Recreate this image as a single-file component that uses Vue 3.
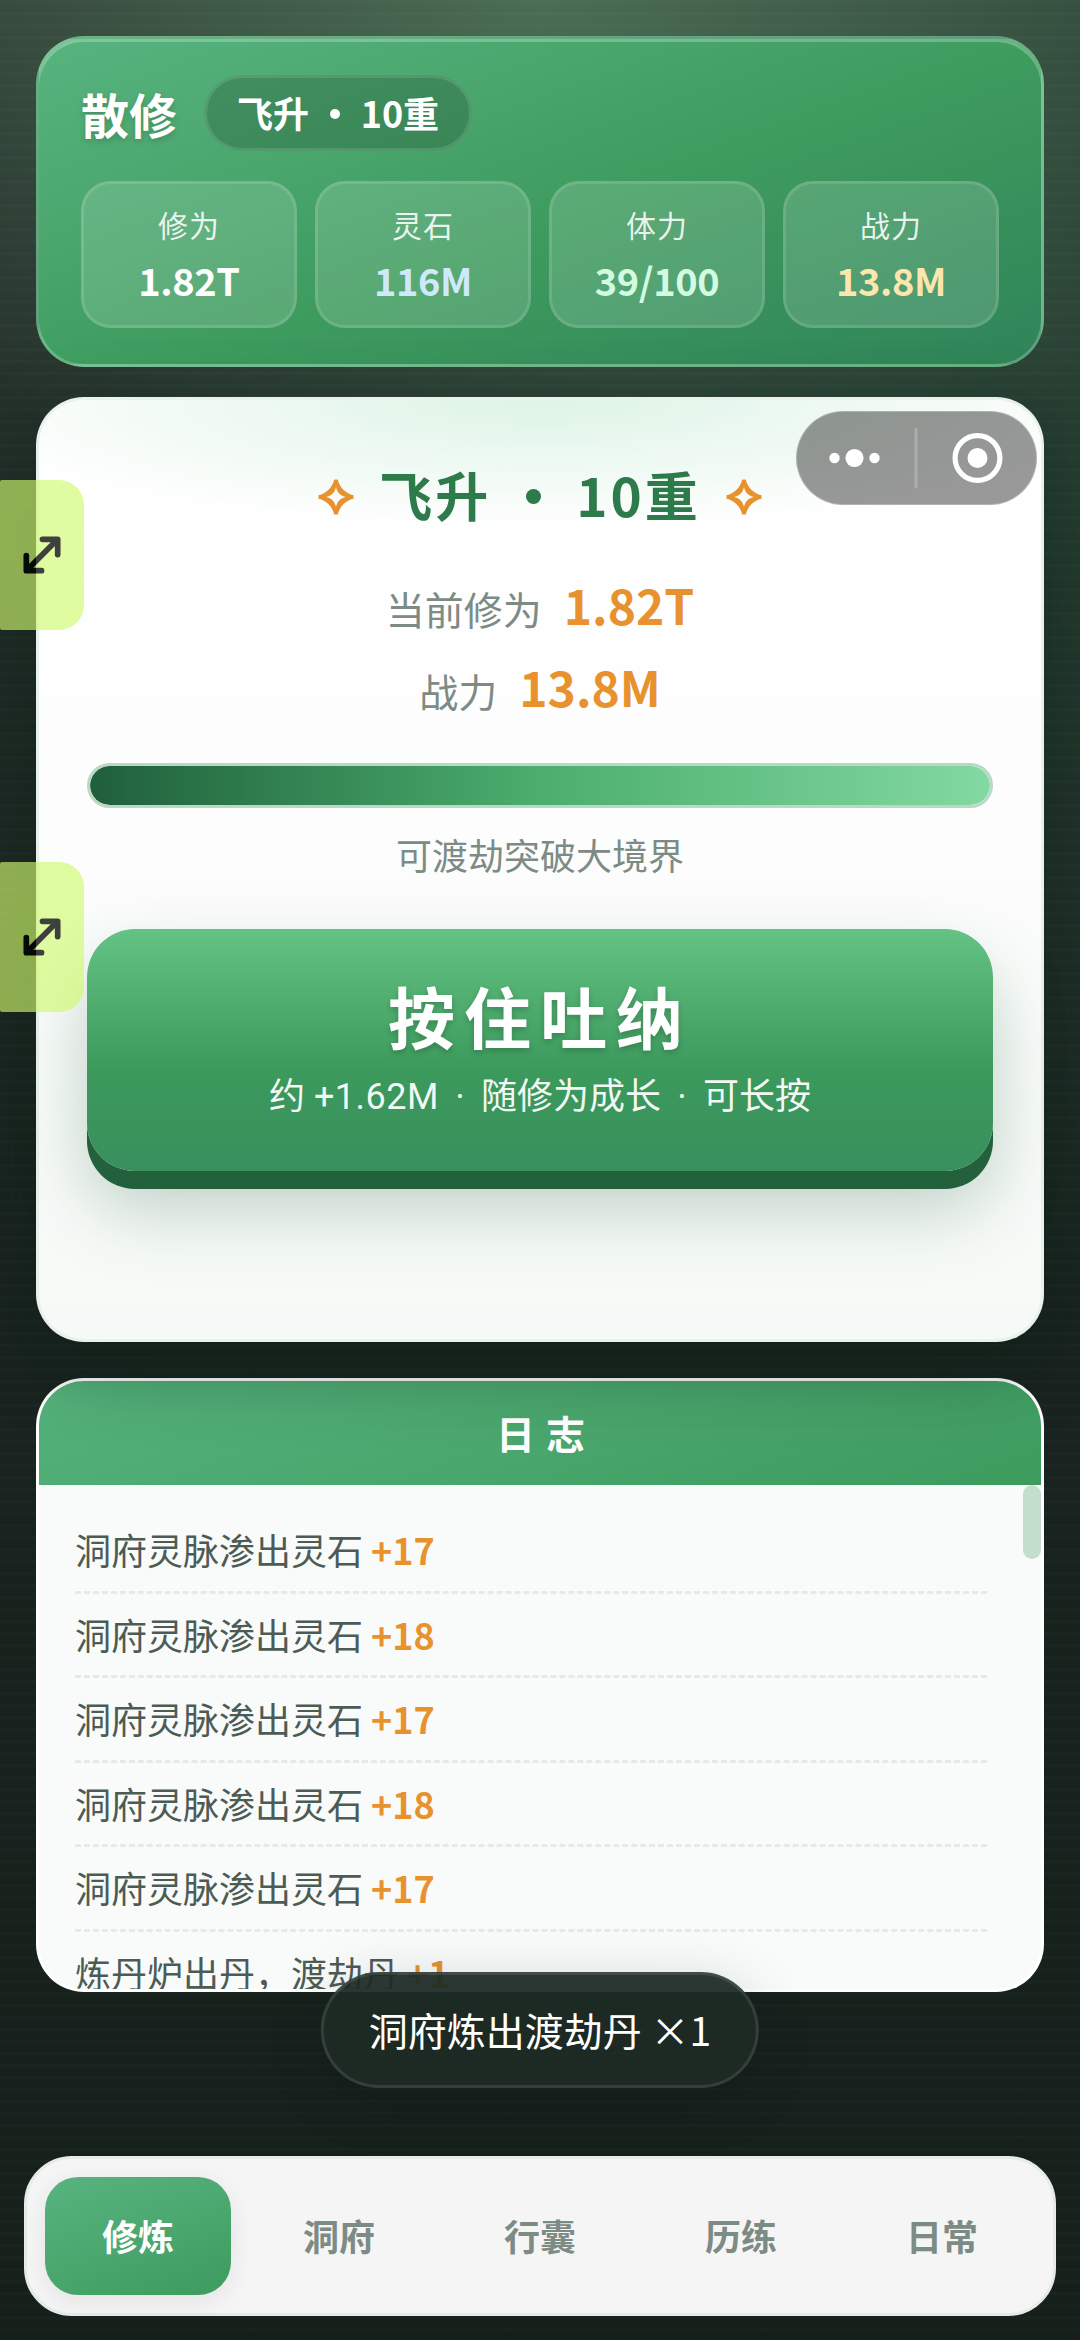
<script setup>
const stats = [
  { label: '修为', value: '1.82T', tone: 'plain' },
  { label: '灵石', value: '116M', tone: 'stone' },
  { label: '体力', value: '39/100', tone: 'energy' },
  { label: '战力', value: '13.8M', tone: 'power' },
]

const logs = [
  { text: '洞府灵脉渗出灵石', gain: '+17' },
  { text: '洞府灵脉渗出灵石', gain: '+18' },
  { text: '洞府灵脉渗出灵石', gain: '+17' },
  { text: '洞府灵脉渗出灵石', gain: '+18' },
  { text: '洞府灵脉渗出灵石', gain: '+17' },
  { text: '炼丹炉出丹，渡劫丹', gain: '+1' },
]

const tabs = ['修炼', '洞府', '行囊', '历练', '日常']
const activeTab = '修炼'
const progress = 100

// Hollow four-pointed star: blunt outer contour, sharp inner cut-out
const starPath =
  'M16.2 .5H19.8C21.4 8.2 27.8 14.6 35.5 16.2V19.8C27.8 21.4 21.4 27.8 19.8 35.5H16.2C14.6 27.8 8.2 21.4 .5 19.8V16.2C8.2 14.6 14.6 8.2 16.2 .5Z' +
  'M18 8C16.8 13.6 13.6 16.8 8 18C13.6 19.2 16.8 22.4 18 28C19.2 22.4 22.4 19.2 28 18C22.4 16.8 19.2 13.6 18 8Z'
</script>

<template>
  <div class="page">
    <header class="profile">
      <div class="identity">
        <span class="name">散修</span>
        <span class="rank">飞升 <i class="dot"></i> 10重</span>
      </div>
      <div class="stats">
        <div v-for="s in stats" :key="s.label" class="stat">
          <span class="stat-label">{{ s.label }}</span>
          <span class="stat-value" :class="s.tone">{{ s.value }}</span>
        </div>
      </div>
    </header>

    <main class="realm">
      <div class="realm-title">
        <svg class="star" viewBox="0 0 36 36"><path :d="starPath" /></svg>
        <h1>飞升 <i class="dot"></i> 10重</h1>
        <svg class="star" viewBox="0 0 36 36"><path :d="starPath" /></svg>
      </div>
      <div class="figure"><span>当前修为</span><b>1.82T</b></div>
      <div class="figure"><span>战力</span><b>13.8M</b></div>
      <div class="bar"><div class="fill" :style="{ width: progress + '%' }"></div></div>
      <p class="hint">可渡劫突破大境界</p>
      <button class="breathe">
        <span class="breathe-title">按住吐纳</span>
        <span class="breathe-sub">约 <em>+1.62M</em><i>·</i>随修为成长<i>·</i>可长按</span>
      </button>
    </main>

    <section class="log">
      <h2>日 志</h2>
      <div class="log-body">
        <ul>
          <li v-for="(l, i) in logs" :key="i">{{ l.text }} <b>{{ l.gain }}</b></li>
        </ul>
        <div class="track"><div class="thumb"></div></div>
      </div>
    </section>

    <nav class="tabs">
      <button v-for="t in tabs" :key="t" :class="{ active: t === activeTab }">{{ t }}</button>
    </nav>

    <div class="toast">洞府炼出渡劫丹 ×1</div>

    <div class="capsule">
      <svg viewBox="0 0 240 94">
        <g fill="#fff">
          <circle cx="38.5" cy="47" r="5.2" />
          <circle cx="58.5" cy="47" r="9.1" />
          <circle cx="78.5" cy="47" r="5.2" />
          <circle cx="181.5" cy="47" r="10" />
        </g>
        <rect x="118.5" y="17" width="3" height="60" fill="#fff" fill-opacity=".22" />
        <circle cx="181.5" cy="47" r="22.4" fill="none" stroke="#fff" stroke-width="5.2" />
      </svg>
    </div>

    <div v-for="n in 2" :key="n" class="handle" :class="'handle-' + n">
      <svg viewBox="0 0 40 40">
        <path d="M20.5 3.5H36.5V19.5M3.5 20.5V36.5H19.5M36 4L4 36" />
      </svg>
    </div>
  </div>
</template>

<style>
body {
  margin: 0;
}
</style>

<style scoped>
* {
  box-sizing: border-box;
}

.page {
  position: relative;
  display: flex;
  flex-direction: column;
  width: 1080px;
  height: 2340px;
  padding: 36px 24px 24px;
  overflow: hidden;
  font-family: "Noto Sans CJK SC", sans-serif;
  background:
    repeating-linear-gradient(180deg, rgba(255, 255, 255, 0.014) 0 3px, transparent 3px 12px),
    radial-gradient(ellipse 760px 560px at 50% 0, rgba(104, 160, 118, 0.48), transparent 100%),
    radial-gradient(ellipse 700px 900px at 100% 18%, rgba(46, 96, 68, 0.32), transparent 100%),
    linear-gradient(180deg, #2f3d35 0, #1f2b26 25%, #19231f 55%, #15201b 100%);
}

button {
  border: 0;
  font-family: inherit;
}

.dot {
  display: inline-block;
  width: 0.28em;
  height: 0.28em;
  margin: 0 0.35em;
  border-radius: 50%;
  background: currentColor;
  vertical-align: 0.24em;
}

h1 .dot {
  margin: 0 0.38em;
}

.profile {
  display: flex;
  flex-direction: column;
  gap: 30px;
  height: 331px;
  margin: 0 12px;
  padding: 36px 42px;
  border: 3px solid rgba(255, 255, 255, 0.22);
  border-radius: 48px;
  background: linear-gradient(160deg, #58b47f 0, #3e9b5e 55%, #2f8459 100%);
  box-shadow: inset 0 3px 0 rgba(255, 255, 255, 0.25);
}

.identity {
  display: flex;
  align-items: center;
  gap: 27px;
  height: 76px;
}

.name {
  color: #fff;
  font-size: 48px;
  font-weight: 700;
  line-height: 76px;
  text-shadow: 0 3px 6px rgba(0, 0, 0, 0.18);
}

.rank {
  height: 76px;
  padding: 0 30px;
  border: 3px solid rgba(255, 255, 255, 0.12);
  border-radius: 38px;
  background: rgba(30, 70, 45, 0.3);
  color: #fff;
  font-size: 36px;
  font-weight: 700;
  line-height: 69px;
  white-space: pre;
}

.stats {
  display: grid;
  grid-template-columns: repeat(4, 1fr);
  gap: 18px;
}

.stat {
  display: flex;
  flex-direction: column;
  align-items: center;
  height: 147px;
  padding-top: 18px;
  border: 3px solid rgba(255, 255, 255, 0.12);
  border-radius: 30px;
  background: rgba(255, 255, 255, 0.14);
}

.stat-label {
  color: rgba(255, 255, 255, 0.88);
  font-size: 30px;
  line-height: 44px;
  letter-spacing: 1px;
}

.stat-value {
  font-size: 38px;
  font-weight: 700;
  line-height: 58px;
  letter-spacing: -0.4px;
  margin-top: 5px;
  color: #fff;
}

.stone { color: #cfe9fb; }
.energy { color: #d2fbe2; }
.power { color: #fde6ae; }

.realm {
  position: relative;
  z-index: 1;
  display: flex;
  flex-direction: column;
  height: 945px;
  margin: 30px 12px 0;
  padding: 57px 48px 0;
  border: 3px solid rgba(232, 240, 235, 0.9);
  border-radius: 48px;
  background:
    radial-gradient(ellipse 620px 130px at 50% 0, #def4e6, transparent 100%) padding-box,
    linear-gradient(180deg, #fff 0, #fefefe 30%, #f6faf7 100%);
  box-shadow: 0 24px 72px rgba(10, 30, 20, 0.42);
}

.realm-title {
  display: flex;
  align-items: center;
  justify-content: center;
  gap: 25px;
  height: 78px;
}

.star {
  width: 36px;
  height: 36px;
  margin-top: 2px;
  fill: #e8922f;
  fill-rule: evenodd;
}

h1 {
  margin: 0;
  color: #2d7a4b;
  font-size: 53px;
  font-weight: 700;
  line-height: 74px;
  height: 78px;
  letter-spacing: 3px;
}

.figure {
  display: flex;
  align-items: baseline;
  justify-content: center;
  gap: 22px;
  height: 82px;
  line-height: 82px;
}

.figure:nth-of-type(2) {
  margin-top: 28px;
}

.figure span {
  color: #7d8b85;
  font-size: 39px;
}

.figure b {
  color: #e8922f;
  font-size: 48px;
}

.bar {
  flex: none;
  height: 45px;
  margin-top: 36px;
  border: 3px solid #b9d9c5;
  border-radius: 23px;
  overflow: hidden;
}

.fill {
  height: 100%;
  border-radius: 20px;
  background: linear-gradient(90deg, #1f5f3b 0, #4bae6e 50%, #83d9a1 100%);
}

.hint {
  margin: 19px 0 0;
  color: #7d8b85;
  font-size: 36px;
  line-height: 54px;
  text-align: center;
}

.breathe {
  display: flex;
  flex: none;
  flex-direction: column;
  align-items: center;
  height: 242px;
  margin-top: 48px;
  padding: 37px 0 0;
  border-radius: 48px;
  background: linear-gradient(180deg, #65c285 0, #3c9a5c 58%, #38905d 100%);
  box-shadow: 0 18px 0 #22613c, 0 36px 72px rgba(31, 95, 59, 0.28);
  color: #fff;
}

.breathe-title {
  font-size: 67px;
  font-weight: 700;
  line-height: 98px;
  letter-spacing: 9px;
  text-shadow: 0 3px 6px rgba(0, 0, 0, 0.2);
}

.breathe-sub {
  margin-top: 6px;
  font-family: Roboto, "Noto Sans CJK SC", sans-serif;
  font-size: 36px;
  line-height: 54px;
  color: rgba(255, 255, 255, 0.94);
}

.breathe-sub em {
  font-style: normal;
  letter-spacing: 0.5px;
}

.breathe-sub i {
  display: inline-block;
  width: 42px;
  font-style: normal;
}

.log {
  height: 614px;
  margin: 36px 12px 0;
  border: 3px solid rgba(255, 255, 255, 0.92);
  border-radius: 48px;
  overflow: hidden;
  background: #f9fbfa;
}

.log h2 {
  margin: 0;
  height: 104px;
  padding-left: 2px;
  background: linear-gradient(160deg, #55b27c 0, #3e9b5e 100%);
  color: #fff;
  font-size: 39px;
  font-weight: 700;
  line-height: 102px;
  letter-spacing: 1px;
  text-align: center;
}

.log-body {
  display: flex;
  height: 504px;
}

.log ul {
  flex: 1;
  margin: 0;
  padding: 24px 36px 0;
  list-style: none;
}

.log li {
  padding: 12px 0;
  border-bottom: 3px dashed #e3ebe6;
  color: #4c5c55;
  font-size: 36px;
  line-height: 57.6px;
}

.log li b {
  color: #e8922f;
}

.track {
  width: 18px;
}

.thumb {
  height: 74px;
  border-radius: 9px;
  background: #c4decd;
}

.tabs {
  display: flex;
  gap: 15px;
  height: 160px;
  margin-top: auto;
  padding: 18px;
  border: 3px solid #e6ebe8;
  border-radius: 48px;
  background: #f5f5f5;
}

.tabs button {
  flex: 1;
  padding: 0 0 3px;
  border-radius: 33px;
  background: none;
  color: #7d8b85;
  font-size: 36px;
  font-weight: 700;
}

.tabs .active {
  background: linear-gradient(160deg, #58b47f, #3e9b5e);
  box-shadow: 0 6px 24px rgba(0, 0, 0, 0.08);
  color: #fff;
}

.toast {
  position: absolute;
  z-index: 2;
  top: 1972px;
  left: 50%;
  height: 116px;
  padding: 0 45px;
  transform: translateX(-50%);
  border: 3px solid rgba(255, 255, 255, 0.1);
  border-radius: 58px;
  background: rgba(30, 42, 37, 0.94);
  box-shadow: 0 12px 60px rgba(0, 0, 0, 0.16);
  color: #fff;
  font-size: 39px;
  line-height: 108px;
  white-space: nowrap;
}

.capsule {
  position: absolute;
  z-index: 3;
  top: 411px;
  left: 796px;
  width: 241px;
  height: 94px;
  border: 1px solid rgba(255, 255, 255, 0.25);
  border-radius: 47px;
  background: rgba(0, 0, 0, 0.4);
}

.capsule svg {
  display: block;
  width: 240px;
  height: 94px;
  margin: -1px;
}

.handle {
  position: absolute;
  z-index: 3;
  left: 0;
  width: 84px;
  height: 150px;
  padding: 56px 0 0 23px;
  border-radius: 2px 25px 25px 2px;
  background: rgba(207, 250, 108, 0.853);
  opacity: 0.75;
}

.handle-1 { top: 480px; }
.handle-2 { top: 862px; }

.handle svg {
  display: block;
  width: 38px;
  height: 38px;
  fill: none;
  stroke: #000;
  stroke-width: 6;
  stroke-linecap: round;
  stroke-linejoin: round;
}
</style>
